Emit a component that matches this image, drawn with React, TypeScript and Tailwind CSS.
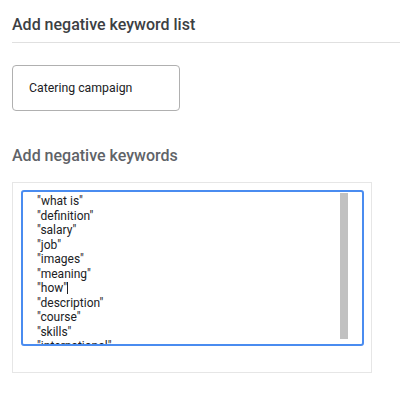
import React from 'react';

const keywords = [
  '"what is"',
  '"definition"',
  '"salary"',
  '"job"',
  '"images"',
  '"meaning"',
  '"how"',
  '"description"',
  '"course"',
  '"skills"',
  '"international"',
];

const App: React.FC = () => {
  return (
    <div className="w-[400px] h-[397px] bg-white overflow-hidden font-['Roboto',sans-serif]">
      {/* Header */}
      <div className="pl-3 pt-[15px]">
        <h1 className="text-[16px] leading-[20px] text-[#3c4043] font-medium">
          Add negative keyword list
        </h1>
        <div className="mt-[7px] h-px bg-[#e0e0e0]" />
      </div>

      {/* List name */}
      <div className="pl-3 pt-[22px]">
        <div className="w-[168px] h-[46px] border border-[#b0b0b0] rounded-[4px] flex items-center pl-4">
          <span className="text-[12.3px] text-[#202124]">Catering campaign</span>
        </div>
      </div>

      {/* Keywords section */}
      <div className="pl-3 pt-[35px]">
        <h2 className="text-[16px] leading-[20px] text-[#5f6368] font-medium">
          Add negative keywords
        </h2>
        <div className="mt-[16px] w-[360px] h-[191px] border border-[#e6e6e6] pt-[7px] pl-[8px]">
          <div className="relative w-[343px] h-[156px] border-2 border-[#4a8cf0] rounded-[3px] overflow-hidden">
            <div className="pl-[14px] pt-[2px] text-[12px] leading-[14.5px] text-[#202124]">
              {keywords.map((k, i) => (
                <div key={i} className="whitespace-pre">
                  {k === '"how"' ? (
                    <span>
                      "how"<span className="inline-block w-px h-[12px] bg-[#202124] align-[-2px]" />
                    </span>
                  ) : (
                    k
                  )}
                </div>
              ))}
            </div>
            {/* scrollbar thumb */}
            <div className="absolute right-[14px] top-[1px] w-[8px] h-[146px] bg-[#c1c1c1]" />
          </div>
        </div>
      </div>
    </div>
  );
};

export default App;
